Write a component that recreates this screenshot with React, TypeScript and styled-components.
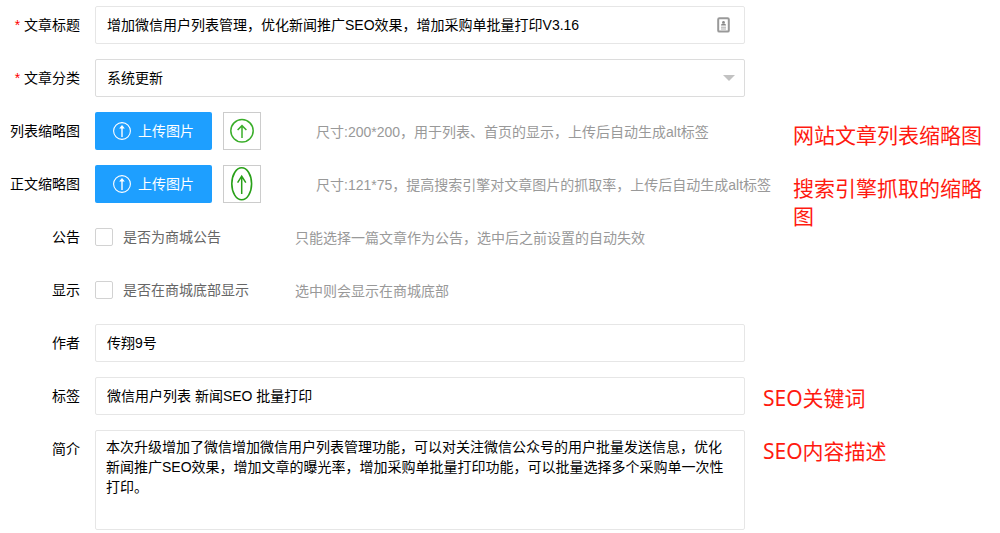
import React from 'react';
import styled, { createGlobalStyle } from 'styled-components';

const GlobalStyle = createGlobalStyle`
  *, *::before, *::after { box-sizing: border-box; }
  body {
    margin: 0;
    background: #fff;
    color: #000;
    font: 14px/20px 'Liberation Sans', 'Noto Sans CJK SC', sans-serif;
  }
  input, select, textarea, button { font: inherit; color: inherit; margin: 0; }
`;

const Form = styled.form`
  display: flex;
  flex-direction: column;
  gap: 15px;
  padding-top: 6px;
`;

const Row = styled.div`
  display: flex;
  align-items: flex-start;
`;

const FixedRow = styled(Row)`
  height: 38px;
`;

const Label = styled.label`
  flex: none;
  width: 95px;
  padding: 9px 15px 9px 0;
  text-align: right;
  white-space: nowrap;
`;

const Star = styled.span`
  color: #f00;
`;

const Field = styled.div`
  flex: 0 0 65%;
  display: grid;
  align-items: center;

  > * { grid-area: 1 / 1; }
  > svg { justify-self: end; pointer-events: none; }
`;

const Input = styled.input`
  width: 100%;
  height: 38px;
  padding: 0 11px 2px;
  border: 1px solid #e6e6e6;
  border-radius: 2px;
  background: #fff;
  outline: none;
`;

const Select = styled.select`
  width: 100%;
  height: 38px;
  padding: 0 11px;
  border: 1px solid #dcdcdc;
  border-radius: 2px;
  background: #fff;
  appearance: none;
  outline: none;
`;

const TextArea = styled.textarea`
  display: block;
  width: 100%;
  height: 100px;
  padding: 6px 10px;
  border: 1px solid #e6e6e6;
  border-radius: 2px;
  resize: none;
  outline: none;
  overflow: hidden;
`;

const CardIcon = styled.svg`
  margin-right: 15px;
`;

const Caret = styled.svg`
  margin-right: 10px;
`;

const Controls = styled.div`
  flex: 1;
  min-width: 0;
  height: 38px;
  display: flex;
  align-items: center;
`;

const UploadButton = styled.button`
  flex: none;
  display: flex;
  align-items: center;
  gap: 7px;
  height: 38px;
  padding: 0 18px;
  border: 0;
  border-radius: 2px;
  background: #1e9fff;
  color: #fff;
  cursor: pointer;
`;

const Preview = styled.div`
  flex: none;
  width: 38px;
  height: 38px;
  margin-left: 11px;
  border: 1px solid #ccc;

  svg { display: block; }
`;

const Hint = styled.span`
  padding-top: 2px;
  color: #999;
  white-space: nowrap;
`;

const UploadHint = styled(Hint)`
  margin-left: 55px;
`;

const CheckLabel = styled.label`
  flex: none;
  display: flex;
  align-items: center;
  gap: 10px;
  width: 200px;
  color: #666;
`;

const Checkbox = styled.input`
  flex: none;
  width: 18px;
  height: 18px;
  border: 1px solid #d2d2d2;
  border-radius: 2px;
  background: #fff;
  appearance: none;

  &:checked { background: #1e9fff; border-color: #1e9fff; }
`;

const Note = styled.p`
  flex: 1;
  margin: 0;
  padding: 7px 0 0 18px;
  color: #ff1a10;
  font: 21px/28px 'Noto Sans', 'Noto Sans CJK SC', sans-serif;
`;

const SideNote = styled(Note)`
  flex: 0 0 207px;
  padding: 9px 0 0;
`;

function FieldLabel({ id, required, children }: { id: string; required?: boolean; children: string }) {
  return (
    <Label htmlFor={id}>
      {required && <Star>* </Star>}
      {children}
    </Label>
  );
}

function UploadIcon() {
  return (
    <svg width="18" height="18" viewBox="0 0 18 18" fill="none" stroke="#fff" aria-hidden="true">
      <circle cx="9" cy="9" r="8.4" strokeWidth="1.1" />
      <path d="M9 15V5" strokeWidth="1.4" />
      <path d="M9 3 11.8 6.6H6.2Z" fill="#fff" stroke="none" />
    </svg>
  );
}

function UploadRow({ id, label, hint, note, preview }: {
  id: string; label: string; hint: string; note: string; preview: React.ReactNode;
}) {
  return (
    <FixedRow>
      <FieldLabel id={id}>{label}</FieldLabel>
      <Controls>
        <UploadButton type="button" id={id}><UploadIcon />上传图片</UploadButton>
        <Preview>{preview}</Preview>
        <UploadHint>{hint}</UploadHint>
      </Controls>
      <SideNote>{note}</SideNote>
    </FixedRow>
  );
}

function CheckRow({ id, label, text, hint }: { id: string; label: string; text: string; hint: string }) {
  return (
    <Row>
      <FieldLabel id={id}>{label}</FieldLabel>
      <Controls>
        <CheckLabel><Checkbox type="checkbox" id={id} />{text}</CheckLabel>
        <Hint>{hint}</Hint>
      </Controls>
    </Row>
  );
}

export default function App() {
  return (
    <>
      <GlobalStyle />
      <Form>
        <Row>
          <FieldLabel id="title" required>文章标题</FieldLabel>
          <Field>
            <Input id="title" defaultValue="增加微信用户列表管理，优化新闻推广SEO效果，增加采购单批量打印V3.16" />
            <CardIcon width="13" height="16" viewBox="0 0 13 16" aria-hidden="true">
              <rect x="1.2" y="1.2" width="10.6" height="13.4" rx="1.2" fill="#fff" stroke="#999" strokeWidth="2" />
              <circle cx="6.5" cy="5.2" r="1.3" fill="#888" />
              <path d="M4 8.6C4 6.8 5.2 6.4 6.5 6.4S9 6.8 9 8.6Z" fill="#888" />
              <path d="M4 10.2h5M4 12h5" stroke="#aaa" strokeWidth="1" />
            </CardIcon>
          </Field>
        </Row>
        <Row>
          <FieldLabel id="category" required>文章分类</FieldLabel>
          <Field>
            <Select id="category" defaultValue="update">
              <option value="update">系统更新</option>
            </Select>
            <Caret width="12" height="6" viewBox="0 0 12 6" aria-hidden="true">
              <path d="M0 0h12L6 6Z" fill="#c2c2c2" />
            </Caret>
          </Field>
        </Row>
        <UploadRow
          id="list-thumb"
          label="列表缩略图"
          hint="尺寸:200*200，用于列表、首页的显示，上传后自动生成alt标签"
          note="网站文章列表缩略图"
          preview={
            <svg width="36" height="36" viewBox="0 0 36 36" fill="none" stroke="#3aae2a" aria-hidden="true">
              <circle cx="18" cy="17.8" r="11.2" strokeWidth="1.5" />
              <path d="M18 25V12.6M13.6 17 18 12.6 22.4 17" strokeWidth="1.5" />
            </svg>
          }
        />
        <UploadRow
          id="body-thumb"
          label="正文缩略图"
          hint="尺寸:121*75，提高搜索引擎对文章图片的抓取率，上传后自动生成alt标签"
          note="搜索引擎抓取的缩略图"
          preview={
            <svg width="36" height="36" viewBox="0 0 36 36" fill="none" stroke="#28a018" aria-hidden="true">
              <ellipse cx="17.7" cy="17.8" rx="9.9" ry="16" strokeWidth="1.6" />
              <path d="M17.7 28V10.2M13.6 16.6 17.7 10.2 21.8 16.6" strokeWidth="1.5" />
            </svg>
          }
        />
        <CheckRow id="notice" label="公告" text="是否为商城公告" hint="只能选择一篇文章作为公告，选中后之前设置的自动失效" />
        <CheckRow id="footer" label="显示" text="是否在商城底部显示" hint="选中则会显示在商城底部" />
        <Row>
          <FieldLabel id="author">作者</FieldLabel>
          <Field><Input id="author" defaultValue="传翔9号" /></Field>
        </Row>
        <Row>
          <FieldLabel id="tags">标签</FieldLabel>
          <Field><Input id="tags" defaultValue="微信用户列表 新闻SEO 批量打印" /></Field>
          <Note>SEO关键词</Note>
        </Row>
        <Row>
          <FieldLabel id="intro">简介</FieldLabel>
          <Field>
            <TextArea
              id="intro"
              defaultValue="本次升级增加了微信增加微信用户列表管理功能，可以对关注微信公众号的用户批量发送信息，优化新闻推广SEO效果，增加文章的曝光率，增加采购单批量打印功能，可以批量选择多个采购单一次性打印。"
            />
          </Field>
          <Note>SEO内容描述</Note>
        </Row>
      </Form>
    </>
  );
}
